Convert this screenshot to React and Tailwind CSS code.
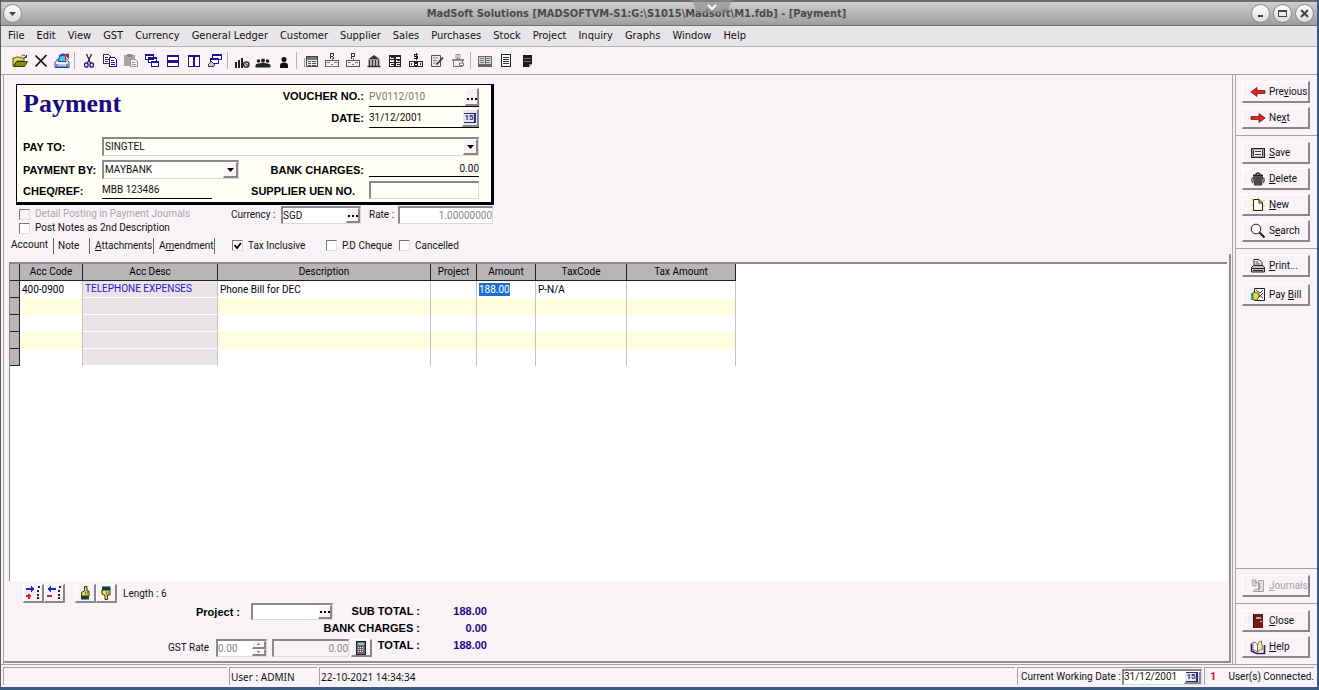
import React from "react";

const SANS = "font-['Roboto','Liberation_Sans',sans-serif]";
const BOLD = "font-['Liberation_Sans',sans-serif] text-[11px] font-bold whitespace-nowrap text-black";
const SUNKEN = "border-t-2 border-l-2 border-r border-b border-t-[#8a888a] border-l-[#8a888a] border-r-[#dcd8dc] border-b-[#dcd8dc]";
const RAISED = "border-t border-l border-r-2 border-b-2 border-t-white border-l-white border-r-[#8a868a] border-b-[#8a868a]";

function Svg({ w = 16, h = 16, crisp = true, children }) {
  return (
    <svg
      width={w}
      height={h}
      viewBox={`0 0 ${w} ${h}`}
      fill="none"
      className="shrink-0"
      shapeRendering={crisp ? "crispEdges" : "auto"}
      aria-hidden="true"
    >
      {children}
    </svg>
  );
}

const NAVY = "#1c1490";

const icons = {
  open: (
    <Svg crisp={false}>
      <path d="M1 13V5h2l1-1h3l1 1h4v3H5z" fill="#e3df6a" stroke="#55550a" />
      <path d="M1.500 13.500 4.500 8.500h11l-3 5z" fill="#8b8b12" stroke="#3c3c05" />
      <path d="M9 3.500c1.500-2 4-2 5 .5M14.500 2v2.500H12" stroke="#333" />
    </Svg>
  ),
  close: (
    <Svg crisp={false}>
      <path d="M2.500 2.500l11 11M13.500 2 2.500 13.500" stroke="#111" strokeWidth="1.700" />
    </Svg>
  ),
  save: (
    <Svg crisp={false}>
      <path d="M1 9.500 4 6h9l2 3.500v5H1z" fill="#e9eef8" stroke="#2b3c86" />
      <path d="M2 11h12v3H2z" fill="#6f86c0" />
      <path d="M4 12h8" stroke="#fff" />
      <path d="M4 8.500 6 3l5-1 1 6.500z" fill="#4cc4ee" stroke="#1b46b0" />
      <path d="M5 3.500C6 1.500 9 .5 11 2" stroke="#1b46b0" strokeWidth="1.300" />
      <path d="M10 1l5-.5V6l-2-1.500z" fill="#a83226" />
      <path d="M12 6.500l1.500 2" stroke="#e8c84a" strokeWidth="1.500" />
    </Svg>
  ),
  cut: (
    <Svg crisp={false}>
      <path d="M5.500 1 9.500 10M10.500 1 6.500 10" stroke="#222" strokeWidth="1.200" />
      <ellipse cx="5.300" cy="12" rx="1.800" ry="2.200" stroke={NAVY} strokeWidth="1.300" />
      <ellipse cx="10.700" cy="12" rx="1.800" ry="2.200" stroke={NAVY} strokeWidth="1.300" />
    </Svg>
  ),
  copy: (
    <Svg>
      <path d="M1.500 1.500h5l2 2v7h-7z" fill="#fff" stroke="#333" />
      <path d="M3 4.500h3M3 6.500h4M3 8.500h3" stroke="#333" />
      <path d="M7.500 4.500h5l2 2v7h-7z" fill="#fff" stroke={NAVY} />
      <path d="M9 7.500h3M9 9.500h4M9 11.500h4" stroke={NAVY} />
    </Svg>
  ),
  paste: (
    <Svg>
      <path d="M1 2h11v11H1z" fill="#a7a4a7" />
      <path d="M4 1h5v3H4z" fill="#8b888b" />
      <path d="M7.500 6.500h5l2 2v5h-7z" fill="#f3f0f3" stroke="#9a979a" />
      <path d="M9 9.500h3M9 11.500h4" stroke="#9a979a" />
    </Svg>
  ),
  cascade: (
    <Svg>
      <path d="M1.500 1.500h8v5h-8zM4.500 4.500h8v5h-8zM7.500 8.500h7v5h-7z" fill="#fff" stroke={NAVY} />
      <path d="M1 1h9v2H1zM4 4h9v2H4zM7 8h8v2H7z" fill={NAVY} />
    </Svg>
  ),
  tileH: (
    <Svg>
      <path d="M2.500 2.500h11v5h-11zM2.500 8.500h11v5h-11z" fill="#fff" stroke={NAVY} />
      <path d="M2 2h12v2H2zM2 8h12v2H2z" fill={NAVY} />
    </Svg>
  ),
  tileV: (
    <Svg>
      <path d="M2.500 2.500h5v11h-5zM8.500 2.500h5v11h-5z" fill="#fff" stroke={NAVY} />
      <path d="M2 2h12v2H2z" fill={NAVY} />
    </Svg>
  ),
  arrange: (
    <Svg>
      <path d="M5.500 1.500h9v5h-9z" fill="#fff" stroke={NAVY} />
      <path d="M5 1h10v2H5z" fill={NAVY} />
      <path d="M3.500 5.500h8v5h-8z" fill="#fff" stroke={NAVY} />
      <path d="M3 5h9v2H3z" fill={NAVY} />
      <path d="M1 13l3-5 4 4-2 2z" fill="#c9c6d6" stroke="#444" />
    </Svg>
  ),
  chart: (
    <Svg crisp={false}>
      <path d="M1 9h2v6H1zM4 7h2v8H4zM7 5h2v10H7z" fill="#222" />
      <circle cx="12.300" cy="11.500" r="2.700" stroke="#222" strokeWidth="1.300" />
      <path d="M12 10v2h2" stroke="#222" />
    </Svg>
  ),
  people: (
    <Svg crisp={false}>
      <circle cx="3.500" cy="8" r="1.800" fill="#222" />
      <circle cx="8" cy="7.500" r="2" fill="#222" />
      <circle cx="12.500" cy="8" r="1.800" fill="#222" />
      <path d="M.5 14.500V12q1-2 4-1.500L8 9.500l3.500 1q3-.5 4 1.500v2.500z" fill="#222" />
    </Svg>
  ),
  person: (
    <Svg crisp={false}>
      <circle cx="8" cy="6.500" r="2.500" fill="#111" />
      <path d="M4 15v-2.500Q4 9.500 8 9.500t4 3V15z" fill="#111" />
    </Svg>
  ),
  ledger: (
    <Svg>
      <path d="M3.500 3.500h11v10h-11z" fill="#f3f0f3" stroke="#444" />
      <path d="M1.500 5v8.500h2" stroke="#999" />
      <path d="M4 4h10v3H4z" fill="#777" />
      <path d="M5 8.500h8M5 10.500h8M5 12.500h8" stroke="#555" />
      <path d="M8.500 8v5" stroke="#f3f0f3" />
    </Svg>
  ),
  receipt: (
    <Svg>
      <path d="M6 .5h4M6 3.500h3M6.500 0v6M9.500 0v3M9.500 4v2" stroke="#333" />
      <path d="M8 5v3" stroke="#777" />
      <path d="M1.500 7.500h13v6h-13z" fill="#f3f0f3" stroke="#555" />
      <path d="M3 9.500h3M10 9.500h3M7 11.500h2M2 13.500h12" stroke="#777" />
    </Svg>
  ),
  payment: (
    <Svg>
      <path d="M6 .5h4M6 3.500h4M6.500 0v6M9.500 0v4" stroke="#333" />
      <path d="M8 5v3" stroke="#777" />
      <path d="M1.500 7.500h13v6h-13z" fill="#f3f0f3" stroke="#555" />
      <path d="M3 9.500h3M10 9.500h3M7 11.500h2" stroke="#777" />
    </Svg>
  ),
  bank: (
    <Svg crisp={false}>
      <path d="M2 6.500 8 2l6 4.500z" fill="#333" />
      <path d="M3.500 7v6M6.500 7v6M9.500 7v6M12.500 7v6" stroke="#333" strokeWidth="1.700" />
      <path d="M1.500 13.500h13" stroke="#333" strokeWidth="1.500" />
    </Svg>
  ),
  journal: (
    <Svg>
      <path d="M2.500 2.500h11v11h-11z" fill="#f3f0f3" stroke="#222" />
      <path d="M2 3h12M2 6.500h12M2 9.500h12M8 3v11" stroke="#222" strokeWidth="1.500" />
      <path d="M4 4h3v1H4zM10 7h3v1h-3zM4 11h3v1H4zM10 11h3v1h-3z" fill="#222" />
    </Svg>
  ),
  cash: (
    <Svg>
      <path d="M6 1.500h4M6 3.500h4M6 5.500h4M6.500 1v3M9.500 3v3M8 0v7" stroke="#222" />
      <path d="M1.500 8.500h13v5h-13z" fill="#f3f0f3" stroke="#222" strokeWidth="1.500" />
      <path d="M6 9h4v4H6zM3 10h1v2H3zM12 10h1v2h-1z" fill="#222" />
      <path d="M7 11h2" stroke="#fff" />
    </Svg>
  ),
  note: (
    <Svg crisp={false}>
      <path d="M2.500 2.500h9v11h-9z" fill="#eceaec" stroke="#555" />
      <path d="M4 5h5M4 7.500h4M4 10h3" stroke="#888" />
      <path d="M7.500 11.500 14 4.500" stroke="#333" strokeWidth="1.800" />
    </Svg>
  ),
  wallet: (
    <Svg crisp={false}>
      <path d="M3.500 6.500h9v7h-9z" fill="#f3f0f3" stroke="#777" />
      <path d="M2 6h12v2H2z" fill="#888" />
      <path d="M6 1.500h4v4H6zM8 1v5" stroke="#999" />
      <path d="M9.500 10h4v2.500h-4z" fill="#fff" stroke="#777" />
    </Svg>
  ),
  book: (
    <Svg>
      <path d="M1.500 3.500h13v9h-13z" fill="#d6d3d6" stroke="#666" />
      <path d="M3 5.500h4M3 7.500h4M3 9.500h4M9 5.500h4M9 7.500h4M9 9.500h4" stroke="#777" />
      <path d="M8 4v9M1 11.500h14M1 13.500h14" stroke="#666" />
    </Svg>
  ),
  list: (
    <Svg>
      <path d="M3.500 1.500h9v12h-9z" fill="#fff" stroke="#222" />
      <path d="M5 4.500h6M5 6.500h6M5 8.500h6M5 10.500h6" stroke="#333" />
    </Svg>
  ),
  report: (
    <Svg>
      <path d="M4 2h9v9l-3 3H4z" fill="#1a1a1a" />
      <path d="M5 5.500h7M5 8.500h7" stroke="#777" />
      <path d="M10 11h3l-3 3z" fill="#999" />
    </Svg>
  ),
  prev: (
    <Svg crisp={false}>
      <path d="M.8 8 7 3.500V6.500h8v3H7v3z" fill="#ee1c1c" stroke="#5c1010" strokeWidth=".7" />
    </Svg>
  ),
  next: (
    <Svg crisp={false}>
      <path d="M15.200 8 9 3.500V6.500H1v3h8v3z" fill="#ee1c1c" stroke="#5c1010" strokeWidth=".7" />
    </Svg>
  ),
  disk: (
    <Svg>
      <path d="M1.500 3.500h13v9h-13z" fill="#a9a6a9" stroke="#222" />
      <path d="M4 5h8v6H4z" fill="#eee" />
      <path d="M5 6.500h6M5 9.500h6" stroke="#333" />
      <path d="M3.500 5v6M12.500 5v6" stroke="#333" />
    </Svg>
  ),
  trash: (
    <Svg crisp={false}>
      <path d="M5.500 3.500Q8 .5 10.500 3.500" stroke="#222" strokeWidth="1.300" />
      <path d="M3 4.500h10" stroke="#222" strokeWidth="2" />
      <path d="M3.500 6h9l-1 8h-7z" fill="#777477" stroke="#222" />
      <path d="M6 7v6M8 7v6M10 7v6" stroke="#222" />
      <path d="M2.500 6.500Q1 9 2.500 12M13.500 6.500Q15 9 13.500 12" stroke="#444" strokeWidth="1.300" />
    </Svg>
  ),
  newDoc: (
    <Svg crisp={false}>
      <path d="M1 1l3 3M1 8h3M1 14l3-2M14 14l-2-2M15 3l-3 2M8 0v3M15 9h-2" stroke="#ece83a" strokeWidth="1.500" />
      <path d="M3.500 2.500H9l3.500 3.500v7.500h-9z" fill="#fffff0" stroke="#222" />
      <path d="M9 2.500V6h3.500" stroke="#222" />
    </Svg>
  ),
  search: (
    <Svg crisp={false}>
      <circle cx="6" cy="6" r="4.800" fill="#fff" stroke="#222" />
      <path d="M9.500 9.500 14.500 14.500" stroke="#111" strokeWidth="1.800" />
    </Svg>
  ),
  print: (
    <Svg crisp={false}>
      <path d="M4 8V1.500h5l3 3V8" fill="#fff" stroke="#222" />
      <path d="M5.500 4h3M5.500 6h5" stroke="#444" />
      <path d="M1.500 9.500 3.500 7.500h9.500l1.500 2v4.500h-13z" fill="#c4c1c4" stroke="#222" />
      <path d="M1.500 10.500h13M3 12.500h10" stroke="#222" />
    </Svg>
  ),
  payBill: (
    <Svg crisp={false}>
      <path d="M4.500 1.500h10v12h-10z" fill="#fff" stroke="#222" />
      <path d="M6 3l4 3 3-3M7 6l6 5M8 11l5-5" stroke="#333" />
      <path d="M1 6h3v7H1z" fill="#16a9b8" />
      <path d="M3 5l5 1 1 3-2 4H3z" fill="#e6df35" stroke="#55500a" strokeWidth=".8" />
    </Svg>
  ),
  journals: (
    <Svg crisp={false}>
      <path d="M2 2h4v6H3zM8.500 2.500h5v11h-5z" fill="#e4e1e4" stroke="#a8a5a8" />
      <path d="M4 4q5 0 6 5v2l-6 1M3 13.500h10M9.500 5v5" stroke="#9d9a9d" />
    </Svg>
  ),
  door: (
    <Svg>
      <path d="M3 1h10v14H3z" fill="#7e1414" />
      <path d="M6 4h5v2H6z" fill="#4ed0d8" />
      <path d="M10 8h2v1h-2z" fill="#e8d84a" />
      <path d="M3.500 1v14" stroke="#3a0505" />
    </Svg>
  ),
  help: (
    <Svg crisp={false}>
      <path d="M1.500 4.500V12l5 2.500h8V6" stroke="#4a1466" strokeWidth="1.700" />
      <path d="M3 3q3 0 4.500 3V13Q6 11 3 11z" fill="#fff" stroke="#555" strokeWidth=".8" />
      <path d="M7.500 6Q8 2.500 11.500 2l1 8.500q-4 .5-5 2.500z" fill="#f4f0a0" stroke="#555" strokeWidth=".8" />
    </Svg>
  ),
  insert: (
    <Svg>
      <path d="M1 3h6v2H1zM6 1l4 3-4 3z" fill="#1c28d8" />
      <path d="M1 10h5v2H1zM2.500 8.500h2v5h-2z" fill="#e02020" />
      <path d="M13 1h2v2h-2zM12 5h2v2h-2zM12 9h2v2h-2zM12 12h2v2h-2z" fill="#222" />
    </Svg>
  ),
  remove: (
    <Svg>
      <path d="M4 3h6v2H4zM5 1v6L1 4z" fill="#1c28d8" />
      <path d="M1 10h5v2H1z" fill="#e02020" />
      <path d="M13 1h2v2h-2zM12 5h2v2h-2zM12 9h2v2h-2zM12 12h2v2h-2z" fill="#222" />
    </Svg>
  ),
  handUp: (
    <Svg crisp={false}>
      <path d="M7.500 1.500h2.500V6h2v5H4.500V7.500l3-1.500z" fill="#e9e04a" stroke="#333" />
      <path d="M8.500 6.500v3M10.300 6.500v3" stroke="#555" strokeWidth=".8" />
      <path d="M4 11h8v3.500H4z" fill="#0f4030" />
    </Svg>
  ),
  handDown: (
    <Svg crisp={false}>
      <path d="M7 14.500h2.500V10h2.500V5H4v4l3 1.500z" fill="#e9e04a" stroke="#333" />
      <path d="M8.500 6.500v3M10.300 6.500v3" stroke="#555" strokeWidth=".8" />
      <path d="M4 1.500h8.500V5H4z" fill="#0f4030" />
    </Svg>
  ),
  calc: (
    <Svg>
      <path d="M3.500 1.500h9v13h-9z" fill="#6b686b" stroke="#222" />
      <path d="M5 3h6v2H5z" fill="#6fd8c8" />
      <path d="M5 7.500h6M5 9.500h6M5 11.500h6" stroke="#eee" strokeDasharray="1 1" />
      <path d="M5 13h6" stroke="#c33" strokeDasharray="1 1" />
    </Svg>
  ),
};

const menus = [
  "File", "Edit", "View", "GST", "Currency", "General Ledger", "Customer", "Supplier", "Sales",
  "Purchases", "Stock", "Project", "Inquiry", "Graphs", "Window", "Help",
];

const tools = [
  ["open", "close", "save"],
  ["cut", "copy", "paste", "cascade", "tileH", "tileV", "arrange"],
  ["chart", "people", "person"],
  ["ledger", "receipt", "payment", "bank", "journal", "cash", "note", "wallet"],
  ["book", "list", "report"],
];

function TitleBar() {
  const round =
    "flex size-[19px] items-center justify-center rounded-full border border-[#8b8b8b] bg-linear-to-b from-white to-[#dcdcdc] text-[#444]";
  return (
    <header className="relative flex h-[26px] shrink-0 items-center justify-between border-t-2 border-b border-t-[#6b6b6b] border-b-[#6f6f6f] bg-linear-to-b from-[#cfcfcf] to-[#9d9d9d] pr-[3px] pl-[2px]">
      <button className={round} aria-label="Window menu">
        <Svg w={7} h={4} crisp={false}><path d="M0 0h7L3.500 4z" fill="#444" /></Svg>
      </button>
      <h1 className="font-['DejaVu_Sans_Condensed','DejaVu_Sans',sans-serif] text-[11px] font-bold whitespace-nowrap text-[#4a4a4a]">
        MadSoft Solutions [MADSOFTVM-S1:G:\S1015\Madsoft\M1.fdb] - [Payment]
      </h1>
      <div className="flex gap-[3px]">
        <button className={round} aria-label="Minimize">
          <Svg w={9} h={9}><path d="M2 6h5v2H2z" fill="#444" /></Svg>
        </button>
        <button className={round} aria-label="Maximize">
          <Svg w={9} h={9}><path d="M.5 1.500h8v6h-8z" stroke="#444" /><path d="M0 1h9v2H0z" fill="#444" /></Svg>
        </button>
        <button className={round} aria-label="Close">
          <Svg w={9} h={9} crisp={false}><path d="M1 1l7 7M8 1 1 8" stroke="#444" strokeWidth="2" /></Svg>
        </button>
      </div>
      <div className="absolute -top-[2px] left-[54%] -translate-x-1/2">
        <Svg w={42} h={14} crisp={false}>
          <path d="M0 0h42q-2 1-4 8-1 5-6 5H10q-5 0-6-5Q2 1 0 0z" fill="#8e8e8e" fillOpacity=".65" />
          <path d="M17 5l4 4 4-4" stroke="#fff" strokeWidth="2" />
        </Svg>
      </div>
    </header>
  );
}

function Check({ label, checked, disabled }) {
  return (
    <label className={`flex items-center gap-[5px] whitespace-nowrap ${disabled ? "text-[#aaa6aa]" : "text-[#111]"}`}>
      <span className="relative flex size-[11px]">
        <input
          type="checkbox"
          defaultChecked={checked}
          disabled={disabled}
          className="peer size-[11px] appearance-none border-t border-l border-r border-b border-t-[#777] border-l-[#777] border-r-[#ddd] border-b-[#ddd] bg-white disabled:bg-[#f7f3f7]"
        />
        <span className="pointer-events-none absolute inset-[2px] hidden peer-checked:block">
          <Svg w={8} h={8} crisp={false}><path d="M.5 3l2.500 3L7 1" stroke="#000" strokeWidth="1.800" /></Svg>
        </span>
      </span>
      {label}
    </label>
  );
}

function Dots({ label }) {
  return (
    <button aria-label={label} className={`flex w-[14px] items-end justify-center self-stretch bg-[#f7f3f7] pb-[4px] ${RAISED}`}>
      <Svg w={10} h={2}><path d="M0 0h2v2H0zM4 0h2v2H4zM8 0h2v2H8z" fill="#000" /></Svg>
    </button>
  );
}

function CalendarButton({ label }) {
  return (
    <button aria-label={label} className={`flex w-[17px] items-center justify-center self-stretch bg-[#e9e6ee] ${RAISED}`}>
      <span className="flex h-[10px] w-[12px] items-center justify-center border-t border-r-2 border-b border-[#2b2b7c] text-[8px] leading-none font-bold text-[#2b2b7c]">
        15
      </span>
    </button>
  );
}

function Combo({ id, value, className }) {
  return (
    <div className={`relative flex h-[19px] bg-[#fffffa] ${SUNKEN} ${className}`}>
      <select id={id} className="w-full appearance-none bg-transparent pl-px leading-none text-[#111] outline-none">
        <option>{value}</option>
      </select>
      <span className={`pointer-events-none absolute inset-y-0 right-0 flex w-[15px] items-center justify-center bg-[#f7f3f7] ${RAISED}`}>
        <Svg w={7} h={4} crisp={false}><path d="M0 0h7L3.500 4z" fill="#000" /></Svg>
      </span>
    </div>
  );
}

function Card() {
  return (
    <section className="flex h-[121px] w-[478px] flex-col border border-r-3 border-b-3 border-black bg-[#fffff6] pr-[12px] pl-[6px]">
      <div className="flex h-[44px] justify-between">
        <h2 className="pt-[3px] font-['Liberation_Serif',serif] text-[26px] leading-[32px] font-bold text-[#1c0a85]">Payment</h2>
        <div className="flex flex-col">
          <div className="flex h-[22px] items-center justify-end gap-[5px]">
            <label htmlFor="voucher" className={BOLD}>VOUCHER NO.:</label>
            <div className="flex w-[110px] items-center self-stretch border-b border-black pt-[3px]">
              <input id="voucher" defaultValue="PV0112/010" className="min-w-0 flex-1 bg-transparent text-[#777] outline-none" />
              <Dots label="Browse vouchers" />
            </div>
          </div>
          <div className="flex h-[21px] items-center justify-end gap-[5px]">
            <label htmlFor="date" className={BOLD}>DATE:</label>
            <div className="flex w-[110px] items-center self-stretch border-b border-black pt-[2px]">
              <input id="date" defaultValue="31/12/2001" className="min-w-0 flex-1 bg-transparent text-[#111] outline-none" />
              <CalendarButton label="Pick date" />
            </div>
          </div>
        </div>
      </div>
      <div className="mt-[8px] flex items-center">
        <label htmlFor="payto" className={`w-[79px] ${BOLD}`}>PAY TO:</label>
        <Combo id="payto" value="SINGTEL" className="flex-1" />
      </div>
      <div className="mt-[4px] flex items-center">
        <label htmlFor="payby" className={`w-[79px] ${BOLD}`}>PAYMENT BY:</label>
        <Combo id="payby" value="MAYBANK" className="w-[137px]" />
        <label htmlFor="charges" className={`ml-auto pr-[5px] ${BOLD}`}>BANK CHARGES:</label>
        <input id="charges" defaultValue="0.00" className="h-[17px] w-[110px] self-start border-b border-black bg-transparent text-right text-[#111] outline-none" />
      </div>
      <div className="mt-[2px] flex items-center">
        <label htmlFor="cheq" className={`w-[79px] pt-[2px] ${BOLD}`}>CHEQ/REF:</label>
        <input id="cheq" defaultValue="MBB 123486" className="h-[18px] w-[110px] border-b border-black bg-transparent text-[#111] outline-none" />
        <label htmlFor="uen" className={`ml-auto pt-[2px] pr-[14px] ${BOLD}`}>SUPPLIER UEN NO.</label>
        <input id="uen" className={`h-[18px] w-[110px] bg-[#fffffa] outline-none ${SUNKEN}`} />
      </div>
    </section>
  );
}

const columns = [
  ["Acc Code", "w-[63px]"],
  ["Acc Desc", "w-[135px]"],
  ["Description", "w-[213px]"],
  ["Project", "w-[46px]"],
  ["Amount", "w-[59px]"],
  ["TaxCode", "w-[91px]"],
  ["Tax Amount", "w-[109px]"],
];

function Grid() {
  return (
    <div className="mr-[2px] ml-[5px] min-h-[110px] flex-1 border-t-2 border-l border-[#8a888a] bg-white">
      <table className="w-[726px] table-fixed border-separate border-spacing-0 whitespace-nowrap text-black">
        <thead>
          <tr className="h-[17px]">
            <th className="w-[10px] border-r border-b border-[#222] bg-[#b7b5b7]" aria-label="Row" />
            {columns.map(([name, w]) => (
              <th key={name} className={`${w} border-r border-b border-[#222] bg-[#b7b5b7] p-0 leading-[16px] font-normal`}>{name}</th>
            ))}
          </tr>
        </thead>
        <tbody>
          {[0, 1, 2, 3, 4].map((r) => {
            const cell = `border-r border-[#c4c2c4] py-0 pr-0 pl-[2px] leading-[16px] ${r % 2 ? "bg-[#ffffe0]" : "bg-white"}`;
            return (
              <tr key={r} className="h-[17px]">
                <td className="border-r border-b border-[#222] bg-[#b7b5b7] p-0" />
                <td className={cell}>{r === 0 && "400-0900"}</td>
                <td className="border-r border-b border-r-[#c4c2c4] border-b-white bg-[#e8e4e8] py-0 pr-0 pl-[2px] leading-[16px] text-[#2a14d0]">
                  {r === 0 && "TELEPHONE EXPENSES"}
                </td>
                <td className={cell}>{r === 0 && "Phone Bill for DEC"}</td>
                <td className={cell} />
                <td className={cell}>
                  {r === 0 && (
                    <input
                      aria-label="Amount"
                      defaultValue="188.00"
                      className="block h-[13px] w-[31px] bg-[#1c6fd0] leading-[13px] text-white outline-none"
                    />
                  )}
                </td>
                <td className={cell}>{r === 0 && "P-N/A"}</td>
                <td className={cell} />
              </tr>
            );
          })}
        </tbody>
      </table>
    </div>
  );
}

function Tool({ icon, label }) {
  return (
    <button aria-label={label} className={`flex h-[19px] w-[21px] items-center justify-center ${RAISED}`}>
      {icons[icon]}
    </button>
  );
}

function Total({ label, value }) {
  return (
    <div className="ml-auto flex font-['Liberation_Sans',sans-serif] text-[11px] leading-[17px] font-bold whitespace-nowrap">
      <span className="text-black">{label}</span>
      <span className="w-[67px] text-right text-[#1c0a85]">{value}</span>
    </div>
  );
}

function Footer() {
  return (
    <div className="shrink-0 pt-[3px] pb-[4px]">
      <div className="flex h-[19px] items-center pl-[19px]">
        <Tool icon="insert" label="Insert line" />
        <Tool icon="remove" label="Delete line" />
        <div className="w-[10px]" />
        <Tool icon="handUp" label="Move up" />
        <Tool icon="handDown" label="Move down" />
        <span className="ml-[6px]">Length : 6</span>
      </div>
      <div className="flex h-[17px] w-[483px] items-center pl-[192px]">
        <label htmlFor="project" className={`w-[55px] ${BOLD}`}>Project :</label>
        <div className={`flex h-[17px] w-[82px] items-center bg-white ${SUNKEN}`}>
          <input id="project" className="min-w-0 flex-1 bg-transparent outline-none" />
          <Dots label="Browse projects" />
        </div>
        <Total label="SUB TOTAL :" value="188.00" />
      </div>
      <div className="flex h-[17px] w-[483px] items-center">
        <Total label="BANK CHARGES :" value="0.00" />
      </div>
      <div className="flex h-[20px] w-[483px] items-end pl-[164px]">
        <label htmlFor="gst" className="w-[48px] self-center pt-[2px] whitespace-nowrap">GST Rate</label>
        <div className={`flex h-[18px] w-[51px] bg-white ${SUNKEN}`}>
          <input id="gst" defaultValue="0.00" className="min-w-0 flex-1 bg-transparent text-[#888] outline-none" />
          <div className="flex w-[14px] flex-col">
            <button aria-label="Increase" className={`flex flex-1 items-center justify-center bg-[#f7f3f7] ${RAISED}`}>
              <Svg w={3} h={2}><path d="M1 0h1v1H1zM0 1h3v1H0z" fill="#888" /></Svg>
            </button>
            <button aria-label="Decrease" className={`flex flex-1 items-center justify-center bg-[#f7f3f7] ${RAISED}`}>
              <Svg w={3} h={2}><path d="M0 0h3v1H0zM1 1h1v1H1z" fill="#888" /></Svg>
            </button>
          </div>
        </div>
        <input aria-label="GST amount" defaultValue="0.00" className={`ml-[5px] h-[18px] w-[77px] bg-[#f7f3f7] text-right text-[#888] outline-none ${SUNKEN}`} />
        <button aria-label="Calculator" className={`ml-[2px] flex h-[18px] w-[21px] items-center justify-center ${RAISED}`}>{icons.calc}</button>
        <div className="ml-auto self-start"><Total label="TOTAL :" value="188.00" /></div>
      </div>
    </div>
  );
}

function SideButton({ icon, pre = "", u, post, disabled }) {
  return (
    <button
      disabled={disabled}
      className={`flex h-[22px] w-[68px] items-center gap-[3px] pl-[7px] whitespace-nowrap text-[#111] disabled:text-[#a5a2a5] ${RAISED}`}
    >
      {icons[icon]}
      <span>{pre}<u>{u}</u>{post}</span>
    </button>
  );
}

function Aside() {
  const group = "flex flex-col items-start py-[6px] pl-[6px]";
  return (
    <aside className="ml-[2px] flex w-[82px] shrink-0 flex-col border-l border-[#a5a2a5]">
      <div className={`${group} gap-[4px] border-b border-[#a5a2a5]`}>
        <SideButton icon="prev" pre="Pre" u="v" post="ious" />
        <SideButton icon="next" pre="Ne" u="x" post="t" />
      </div>
      <div className={`${group} gap-[4px] border-b border-[#a5a2a5]`}>
        <SideButton icon="disk" u="S" post="ave" />
        <SideButton icon="trash" u="D" post="elete" />
        <SideButton icon="newDoc" u="N" post="ew" />
        <SideButton icon="search" pre="S" u="e" post="arch" />
      </div>
      <div className={`${group} gap-[7px]`}>
        <SideButton icon="print" u="P" post="rint..." />
        <SideButton icon="payBill" pre="Pay " u="B" post="ill" />
      </div>
      <div className={`${group} mt-auto border-t border-b border-[#a5a2a5]`}>
        <SideButton icon="journals" u="J" post="ournals" disabled />
      </div>
      <div className={`${group} gap-[4px]`}>
        <SideButton icon="door" u="C" post="lose" />
        <SideButton icon="help" u="H" post="elp" />
      </div>
    </aside>
  );
}

function StatusBar() {
  const pane = "flex h-[18px] items-center whitespace-nowrap border-t border-l border-[#a5a2a5]";
  return (
    <footer className="flex h-[23px] shrink-0 items-center gap-[2px] border-t border-[#a5a2a5] pr-[3px] pl-[2px] text-[#111]">
      <div className={`${pane} w-[224px]`} />
      <div className={`${pane} w-[88px] pl-px font-['Noto_Sans',sans-serif]`}>User : ADMIN</div>
      <div className={`${pane} flex-1 pl-px font-['Noto_Sans',sans-serif]`}>22-10-2021 14:34:34</div>
      <div className={`${pane} pl-[3px]`}>
        <label htmlFor="workdate" className="w-[101px]">Current Working Date :</label>
        <div className={`flex h-[16px] w-[80px] items-center bg-white ${SUNKEN}`}>
          <input id="workdate" defaultValue="31/12/2001" className="min-w-0 flex-1 bg-transparent outline-none" />
          <CalendarButton label="Pick working date" />
        </div>
      </div>
      <div className={`${pane} w-[110px] justify-between pl-[5px]`}>
        <span className="text-[11px] font-bold text-[#d01818]">1</span>
        <span>User(s) Connected.</span>
      </div>
    </footer>
  );
}

export default function App() {
  const tab = "h-[16px] border-r border-[#666] text-left whitespace-nowrap";
  return (
    <div className={`flex min-h-screen bg-[#3b5b87] pr-[2px] pb-[3px] text-[10px] leading-[14px] text-[#111] ${SANS}`}>
      <div className="flex flex-1 flex-col border-l border-[#5c5a5c] bg-[#f7f3f7]">
        <TitleBar />
        <nav className="flex h-[21px] shrink-0 items-center gap-[12px] border-b border-[#b5b3b5] bg-[#e7e5e7] pl-[7px] font-['DejaVu_Sans_Condensed','DejaVu_Sans',sans-serif] text-[11px]">
          {menus.map((m) => <button key={m} className="whitespace-nowrap">{m}</button>)}
        </nav>
        <div className="flex h-[28px] shrink-0 items-center border-b border-[#a5a2a5] pl-[8px]" role="toolbar">
          {tools.map((set, i) => (
            <React.Fragment key={i}>
              {i > 0 && <span className="mr-[3px] ml-[2px] h-[17px] w-px bg-[#b5b2b5]" />}
              {set.map((t) => (
                <button key={t} aria-label={t} className="flex w-[21px] justify-center">{icons[t]}</button>
              ))}
            </React.Fragment>
          ))}
        </div>
        <div className="flex flex-1 pl-[2px]">
          <main className="flex flex-1 flex-col border-r border-l border-[#a5a2a5] pt-[9px] pb-px">
            <div className="pl-[12px]"><Card /></div>
            <div className="flex h-[32px] items-start pl-[15px]">
              <div className="flex w-[212px] flex-col pt-[2px]">
                <Check label="Detail Posting in Payment Journals" disabled />
                <Check label="Post Notes as 2nd Description" />
              </div>
              <div className="flex items-center pt-px">
                <label htmlFor="currency" className="w-[50px] whitespace-nowrap">Currency :</label>
                <div className={`flex h-[18px] w-[80px] items-center bg-white ${SUNKEN}`}>
                  <input id="currency" defaultValue="SGD" className="min-w-0 flex-1 bg-transparent outline-none" />
                  <Dots label="Browse currencies" />
                </div>
                <label htmlFor="rate" className="w-[37px] pl-[8px] whitespace-nowrap">Rate :</label>
                <input id="rate" defaultValue="1.00000000" className={`h-[18px] w-[95px] bg-white text-right text-[#888] outline-none ${SUNKEN}`} />
              </div>
            </div>
            <div className="flex h-[17px] items-center pl-[5px]">
              <button className={`${tab} w-[45px] pb-[2px] pl-[2px]`}>Account</button>
              <button className={`${tab} w-[36px] pl-[4px]`}>Note</button>
              <button className={`${tab} w-[64px] pl-[5px]`}><u>A</u>ttachments</button>
              <button className={`${tab} w-[61px] pl-[5px]`}>A<u>m</u>endment</button>
              <div className="w-[111px] pl-[17px]"><Check label="Tax Inclusive" checked /></div>
              <div className="w-[73px]"><Check label="P.D Cheque" /></div>
              <Check label="Cancelled" />
            </div>
            <div className="mr-px flex flex-1 flex-col border-r-2 border-b-2 border-[#918e91] pt-[8px]">
              <Grid />
              <Footer />
            </div>
          </main>
          <Aside />
        </div>
        <StatusBar />
      </div>
    </div>
  );
}
